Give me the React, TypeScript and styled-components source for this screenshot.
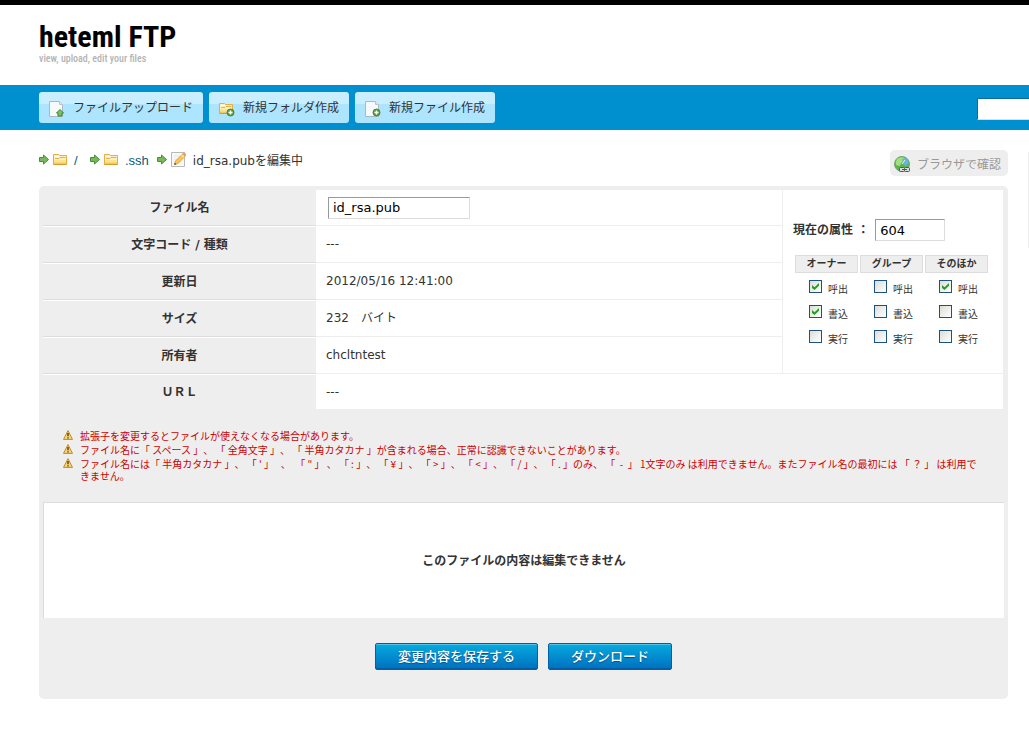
import React from "react";
import styled, { createGlobalStyle } from "styled-components";

const GlobalStyle = createGlobalStyle`
  * { box-sizing: border-box; }
  body {
    margin: 0;
    background: #fff;
    color: #333;
    font-family: "DejaVu Sans", "Noto Sans CJK JP", sans-serif;
    font-size: 12px;
    line-height: 18px;
    text-spacing-trim: space-all;
  }
  a { text-decoration: none; }
`;

const Page = styled.div`
  border-top: 5px solid #000;
  overflow-x: clip;
`;

const Header = styled.header`
  height: 80px;
  padding: 16px 39px 0;
`;

const Logo = styled.h1`
  margin: 0;
  color: #000;
  font: bold 30px/32px "Roboto Condensed", "Open Sans Condensed", Roboto, sans-serif;
`;

const Tagline = styled.p`
  margin: 0;
  color: #b4b4b4;
  font: 500 10px/12px "Roboto Condensed", "Open Sans Condensed", Roboto, sans-serif;
`;

const Toolbar = styled.nav`
  display: flex;
  align-items: center;
  gap: 6px;
  height: 45px;
  padding-left: 39px;
  background: #008fcf;
`;

const ToolButton = styled.button`
  display: flex;
  align-items: center;
  gap: 8px;
  height: 31px;
  padding: 0 10px 2px;
  border: 0;
  border-radius: 3px;
  background: linear-gradient(#c9eeff 12px, #ace5fd 12px);
  color: #333;
  font: 12px/18px "Noto Sans CJK JP", sans-serif;
  svg { margin-top: 4px; }
`;

const Search = styled.input`
  flex: 0 0 160px;
  min-width: 0;
  width: 160px;
  height: 22px;
  margin: 2px -108px 0 auto;
  padding: 0 4px;
  border: 1px solid #0a6ba3;
  border-right-color: #ddd;
  border-bottom-color: #ddd;
  background: #fff;
`;

const Columns = styled.div`
  display: flex;
  align-items: flex-start;
  gap: 20px;
  padding: 20px 0 33px 39px;
`;

const Main = styled.main`
  flex: 1;
  min-width: 0;
`;

const Sidebar = styled.aside`
  flex: 0 0 200px;
  height: 96px;
  margin: 2px -199px 0 0;
  border: 1px solid #eee;
`;

const TopRow = styled.div`
  display: flex;
  justify-content: space-between;
  height: 36px;
`;

const Crumbs = styled.div`
  display: flex;
  align-items: center;
  height: 20px;
  font-size: 12px;
`;

const Crumb = styled.span`
  display: flex;
  align-items: center;
  gap: 3px;
  margin-right: 8px;
  a, b { margin-left: 3px; padding-top: 2px; font-weight: normal; }
  a {
    min-width: 8px;
    color: #006080;
    font: 13px/18px "Liberation Sans", sans-serif;
  }
`;

const CheckButton = styled.button`
  display: flex;
  align-items: center;
  gap: 6px;
  height: 26px;
  padding: 2px 7px 0 4px;
  border: 0;
  border-radius: 5px;
  background: #eee;
  color: #999;
  font: 12px/18px "Noto Sans CJK JP", sans-serif;
`;

const Panel = styled.section`
  padding: 4px 4px 29px;
  border-radius: 5px;
  background: #eee;
`;

const InfoTable = styled.table`
  width: 100%;
  padding-right: 1px;
  border-spacing: 0;
  table-layout: fixed;
`;

const Label = styled.th<{ $last?: boolean; $first?: boolean }>`
  height: ${(p) => (p.$last ? 35 : p.$first ? 36 : 37)}px;
  padding: 0;
  border-top: ${(p) => (p.$first ? 0 : 1)}px solid #fff;
  border-bottom: ${(p) => (p.$last ? 0 : 1)}px solid #ddd;
`;

const Value = styled.td<{ $last?: boolean }>`
  padding: 0 0 0 10px;
  border-bottom: ${(p) => (p.$last ? 0 : 1)}px solid #eee;
  background: #fff;
`;

const Field = styled.input<{ $width: number }>`
  display: block;
  width: ${(p) => p.$width}px;
  height: 22px;
  margin: 0 2px;
  padding: 1px 4px;
  border: 1px solid;
  border-color: #999 #ddd #ddd #999;
  border-radius: 0;
  background: #fff;
  color: #000;
  font: 13px/18px "DejaVu Sans", sans-serif;
`;

const Permissions = styled.td`
  padding: 4px 0 0 10px;
  border-left: 1px solid #eee;
  border-bottom: 1px solid #eee;
  background: #fff;
`;

const ModeLabel = styled.label`
  display: flex;
  align-items: center;
  gap: 4px;
  font-weight: bold;
`;

const PermTable = styled.table`
  margin-top: 14px;
  border-spacing: 2px 0;
  font-size: 10px;
  line-height: 16px;
  th {
    width: 63px;
    padding: 0;
    border: 1px solid #ddd;
    background: #eee;
  }
  td {
    height: 25px;
    padding: 2px 0 0 14px;
  }
`;

const PermLabel = styled.label`
  display: flex;
  align-items: center;
  gap: 6px;
  span { padding-top: 7px; }
`;

const Tick = styled.input`
  appearance: none;
  width: 13px;
  height: 13px;
  margin: 0;
  border: 1px solid #1c5180;
  background: linear-gradient(135deg, #dcdcd7, #fff);
  &:checked::before {
    content: "";
    display: block;
    width: 7px;
    height: 7px;
    margin: 2px;
    background: #21a121;
    clip-path: polygon(0 28%, 36% 60%, 100% 0, 100% 40%, 36% 100%, 0 70%);
  }
`;

const Warnings = styled.ul`
  margin: 21px 20px 20px;
  padding: 0;
  list-style: none;
  color: #c00;
  font: 10px/12px "Noto Sans CJK JP", sans-serif;
  li {
    display: flex;
    align-items: flex-start;
    gap: 7px;
    margin-bottom: 2px;
  }
  svg { flex: none; }
`;

const Notice = styled.div`
  display: flex;
  align-items: center;
  justify-content: center;
  height: 116px;
  border-top: 1px solid #ddd;
  border-left: 1px solid #ddd;
  background: #fff;
  font-weight: bold;
`;

const Actions = styled.div`
  display: flex;
  justify-content: center;
  gap: 10px;
  padding-top: 25px;
`;

const ActionButton = styled.button`
  height: 27px;
  padding: 0 22px 2px;
  border: 1px solid #0060a8;
  border-radius: 2px;
  background: linear-gradient(#06aadf, #0070bf);
  box-shadow: inset 0 1px #4fc4ea, inset 0 -1px #005da5;
  color: #fff;
  font: 500 13px/22px "Noto Sans CJK JP", sans-serif;
  text-shadow: 0 1px 1px #00508c;
`;

const PlusBadge = () => (
  <g>
    <circle cx="11.500" cy="11.500" r="3.500" fill="#5c9f3a" stroke="#4a8430" />
    <path d="M11.500 9.500v4M9.500 11.500h4" stroke="#fff" strokeWidth="1.400" />
  </g>
);

const PageIcon = ({ badge }: { badge: "up" | "plus" }) => (
  <svg width="16" height="16" viewBox="0 0 16 16">
    <path d="M.5.5h10l3 3v12H.5z" fill="#f6fafc" stroke="#a9bac5" />
    <path d="M10.500.5v3h3" fill="#e2eaee" stroke="#b5c4cd" />
    {badge === "up" ? (
      <path d="M11 8.500l3.500 3.500h-1.500v3H9v-3H7.500z" fill="#7cc06a" stroke="#37852f" />
    ) : (
      <PlusBadge />
    )}
  </svg>
);

const FolderShape = () => (
  <>
    <path d="M.5 12.500v-10h5l1 1h7v9z" fill="#fdf0bd" stroke="#e3ae42" />
    <path d="M2 4.500h4l1 1h5.500" fill="none" stroke="#fff" />
    <path d="M2 6.500h4l1-1h5.500" fill="none" stroke="#deb256" />
    <path d="M1 12V8h12v4z" fill="#fbe391" />
    <path d="M1 10.500h12" stroke="#f8d877" />
    <path d="M1 11.500h12" stroke="#f2c75b" />
    <path d="M.5 12.500h13" stroke="#d49c33" />
  </>
);

const FolderIcon = () => (
  <svg width="15" height="16" viewBox="0 0 15 16">
    <FolderShape />
  </svg>
);

const FolderAddIcon = () => (
  <svg width="16" height="16" viewBox="0 0 16 16">
    <FolderShape />
    <PlusBadge />
  </svg>
);

const ArrowIcon = () => (
  <svg width="11" height="16" viewBox="0 0 11 16">
    <path d="M.5 5.500h4v-2.500l5 4.500-5 4.500v-2.500h-4z" fill="#74bb55" stroke="#4d8a3a" />
  </svg>
);

const EditIcon = () => (
  <svg width="16" height="18" viewBox="0 0 16 18">
    <path d="M.5 1.500h13v14h-13z" fill="#f8f8f8" stroke="#b8b8b8" />
    <path d="M3 5h6M3 8h4" stroke="#e6e6e6" />
    <path d="M3.500 13.500l1-3.500 7.500-7.500 2.500 2.500-7.500 7.500z" fill="#f9c650" stroke="#d9953a" strokeWidth=".8" />
    <path d="M10.500 4l2.500 2.500" stroke="#fff" />
    <path d="M12 2.500l1-1q2 .5 2 2.500l-1 1z" fill="#d99a78" />
    <path d="M3.200 13.800l.6-2 1.500 1.500z" fill="#333" />
  </svg>
);

const GlobeIcon = () => (
  <svg width="17" height="17" viewBox="0 0 17 17">
    <circle cx="8" cy="8" r="7.500" fill="#5bb54c" stroke="#72a37c" />
    <path d="M3 3q4-3 8-1l-1 3-3 2-1 3-4-1q-1-3 1-6z" fill="#a1df7f" />
    <path d="M8 3l5-1 2 5-3 3-3-2z" fill="#67b4d8" />
    <path d="M8 8l3-4" stroke="#e6f5e2" />
    <g fill="#ddd" stroke="#555">
      <rect x="5.500" y="11.500" width="5" height="4" rx="1" />
      <rect x="10.500" y="11.500" width="5" height="4" rx="1" />
      <path d="M8 13.500h5" />
    </g>
  </svg>
);

const WarningIcon = () => (
  <svg width="10" height="10" viewBox="0 0 10 10">
    <path d="M5 .6L9.500 9.400H.5z" fill="#f8d775" stroke="#c08a2b" strokeLinejoin="round" />
    <path d="M5 3v3.300M5 7.300v1.300" stroke="#4d3b17" strokeWidth="1.400" />
  </svg>
);

const warnings = [
  "拡張子を変更するとファイルが使えなくなる場合があります。",
  "ファイル名に「 スペース 」、 「 全角文字 」、 「 半角カタカナ 」が含まれる場合、正常に認識できないことがあります。",
  "ファイル名には「 半角カタカナ 」、 「 ' 」\u00a0\u00a0 、\u00a0 「 \" 」 、 「 : 」、 「 ¥ 」、 「 > 」、 「 < 」、 「 / 」、 「 . 」のみ、 「\u00a0 - \u00a0」\u00a01文字のみ は利用できません。またファイル名の最初には 「 ？ 」 は利用できません。",
];

const groups = ["オーナー", "グループ", "そのほか"];
const rights = [
  { name: "呼出", on: [true, false, true] },
  { name: "書込", on: [true, false, false] },
  { name: "実行", on: [false, false, false] },
];

const details = [
  ["文字コード / 種類", "---"],
  ["更新日", "2012/05/16 12:41:00"],
  ["サイズ", "232　バイト"],
  ["所有者", "chcltntest"],
];

export default function App() {
  return (
    <Page>
      <GlobalStyle />
      <Header>
        <Logo>heteml FTP</Logo>
        <Tagline>view, upload, edit your files</Tagline>
      </Header>
      <Toolbar>
        <ToolButton><PageIcon badge="up" />ファイルアップロード</ToolButton>
        <ToolButton><FolderAddIcon />新規フォルダ作成</ToolButton>
        <ToolButton><PageIcon badge="plus" />新規ファイル作成</ToolButton>
        <Search type="text" aria-label="検索" />
      </Toolbar>
      <Columns>
        <Main>
          <TopRow>
            <Crumbs>
              <Crumb><ArrowIcon /><FolderIcon /><a href="#root">/</a></Crumb>
              <Crumb><ArrowIcon /><FolderIcon /><a href="#ssh">.ssh</a></Crumb>
              <Crumb><ArrowIcon /><EditIcon /><b>id_rsa.pubを編集中</b></Crumb>
            </Crumbs>
            <CheckButton><GlobeIcon />ブラウザで確認</CheckButton>
          </TopRow>
          <Panel>
            <InfoTable>
              <colgroup>
                <col style={{ width: 273 }} />
                <col />
                <col style={{ width: 221 }} />
              </colgroup>
              <tbody>
                <tr>
                  <Label $first scope="row"><label htmlFor="filename">ファイル名</label></Label>
                  <Value><Field id="filename" $width={142} defaultValue="id_rsa.pub" /></Value>
                  <Permissions rowSpan={5}>
                    <ModeLabel>現在の属性 ：<Field $width={70} defaultValue="604" /></ModeLabel>
                    <PermTable>
                      <thead>
                        <tr>{groups.map((g) => <th key={g} scope="col">{g}</th>)}</tr>
                      </thead>
                      <tbody>
                        {rights.map((r) => (
                          <tr key={r.name}>
                            {r.on.map((on, i) => (
                              <td key={i}>
                                <PermLabel>
                                  <Tick type="checkbox" defaultChecked={on} />
                                  <span>{r.name}</span>
                                </PermLabel>
                              </td>
                            ))}
                          </tr>
                        ))}
                      </tbody>
                    </PermTable>
                  </Permissions>
                </tr>
                {details.map(([name, value]) => (
                  <tr key={name}>
                    <Label scope="row">{name}</Label>
                    <Value>{value}</Value>
                  </tr>
                ))}
                <tr>
                  <Label $last scope="row">ＵＲＬ</Label>
                  <Value $last colSpan={2}>---</Value>
                </tr>
              </tbody>
            </InfoTable>
            <Warnings>
              {warnings.map((w) => <li key={w}><WarningIcon /><span>{w}</span></li>)}
            </Warnings>
            <Notice>このファイルの内容は編集できません</Notice>
            <Actions>
              <ActionButton>変更内容を保存する</ActionButton>
              <ActionButton>ダウンロード</ActionButton>
            </Actions>
          </Panel>
        </Main>
        <Sidebar />
      </Columns>
    </Page>
  );
}
